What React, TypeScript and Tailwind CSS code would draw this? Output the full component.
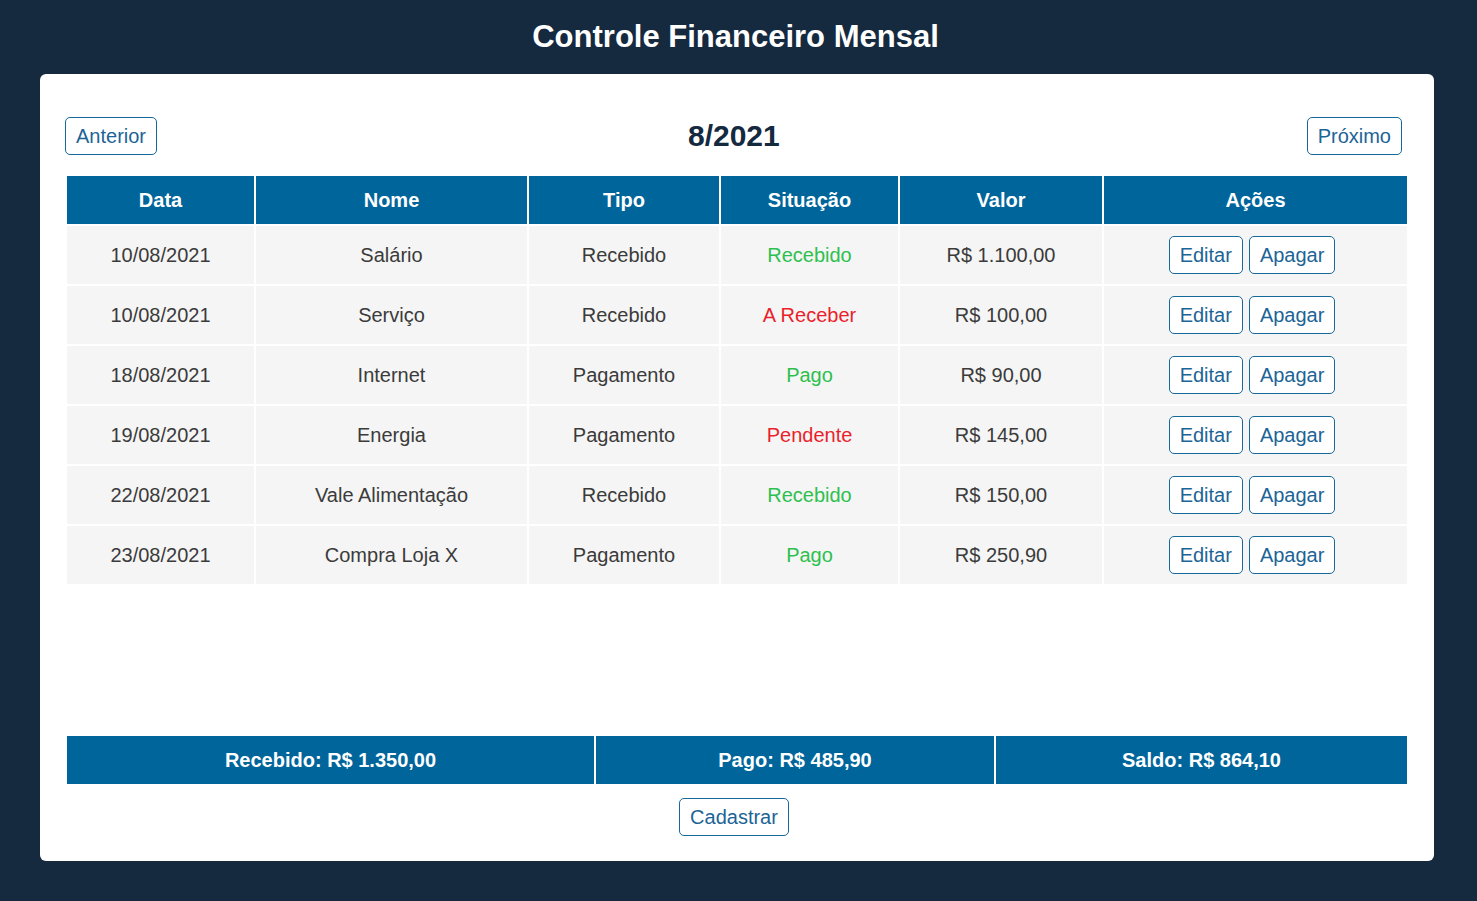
import React from 'react'

type Item = {
  data: string
  nome: string
  tipo: string
  situacao: string
  ok: boolean
  valor: string
}

const ITEMS: Item[] = [
  { data: '10/08/2021', nome: 'Salário', tipo: 'Recebido', situacao: 'Recebido', ok: true, valor: 'R$ 1.100,00' },
  { data: '10/08/2021', nome: 'Serviço', tipo: 'Recebido', situacao: 'A Receber', ok: false, valor: 'R$ 100,00' },
  { data: '18/08/2021', nome: 'Internet', tipo: 'Pagamento', situacao: 'Pago', ok: true, valor: 'R$ 90,00' },
  { data: '19/08/2021', nome: 'Energia', tipo: 'Pagamento', situacao: 'Pendente', ok: false, valor: 'R$ 145,00' },
  { data: '22/08/2021', nome: 'Vale Alimentação', tipo: 'Recebido', situacao: 'Recebido', ok: true, valor: 'R$ 150,00' },
  { data: '23/08/2021', nome: 'Compra Loja X', tipo: 'Pagamento', situacao: 'Pago', ok: true, valor: 'R$ 250,90' },
]

const btn =
  'h-[38px] px-[10px] rounded-[5px] border border-[#17699a] bg-white text-[20px] leading-none text-[#1c6496]'

export default function App() {
  return (
    <div
      className="h-screen flex flex-col bg-[#15293f]"
      style={{ fontFamily: '"Liberation Sans", Arial, sans-serif' }}
    >
      <header className="h-[74px] flex items-center justify-center">
        <h1 className="text-[31px] font-bold text-white pr-[6px]">Controle Financeiro Mensal</h1>
      </header>

      <main className="flex-1 ml-[40px] mr-[43px] mb-[40px] bg-white rounded-[6px] px-[25px] pt-[43px] pb-[25px] flex flex-col">
        <div className="flex items-center justify-between h-[38px]">
          <button className={btn}>Anterior</button>
          <h2 className="text-[30px] leading-[38px] font-bold text-[#15293f] pl-[4px]">8/2021</h2>
          <button className={btn + ' mr-[7px]'}>Próximo</button>
        </div>

        <table className="mt-[19px] w-full table-fixed border-separate border-spacing-[2px] text-[20px]">
          <thead>
            <tr className="h-[48px] bg-[#00659a] text-white">
              <th className="w-[187px] font-bold">Data</th>
              <th className="w-[271px] font-bold">Nome</th>
              <th className="w-[190px] font-bold">Tipo</th>
              <th className="w-[177px] font-bold">Situação</th>
              <th className="w-[202px] font-bold">Valor</th>
              <th className="w-[303px] font-bold">Ações</th>
            </tr>
          </thead>
          <tbody>
            {ITEMS.map((it, i) => (
              <tr key={i} className="h-[58px] text-center text-[#3b3b3b]">
                <td className="bg-[#f5f5f5]">{it.data}</td>
                <td className="bg-[#f5f5f5]">{it.nome}</td>
                <td className="bg-[#f5f5f5]">{it.tipo}</td>
                <td className={'bg-[#f5f5f5] ' + (it.ok ? 'text-[#2dc04e]' : 'text-[#ea1f2c]')}>
                  {it.situacao}
                </td>
                <td className="bg-[#f5f5f5]">{it.valor}</td>
                <td className="bg-[#f5f5f5]">
                  <div className="flex justify-center gap-[6px] pr-[7px]">
                    <button className={btn}>Editar</button>
                    <button className={btn}>Apagar</button>
                  </div>
                </td>
              </tr>
            ))}
          </tbody>
        </table>

        <div className="flex-1" />

        <table className="w-full table-fixed border-separate border-spacing-[2px] text-[20px]">
          <tbody>
            <tr className="h-[48px] bg-[#00659a] text-white font-bold text-center">
              <td className="w-[527px]">Recebido: R$ 1.350,00</td>
              <td className="w-[398px]">Pago: R$ 485,90</td>
              <td className="w-[411px]">Saldo: R$ 864,10</td>
            </tr>
          </tbody>
        </table>

        <div className="mt-[12px] flex justify-center pr-[6px]">
          <button className={btn}>Cadastrar</button>
        </div>
      </main>
    </div>
  )
}
